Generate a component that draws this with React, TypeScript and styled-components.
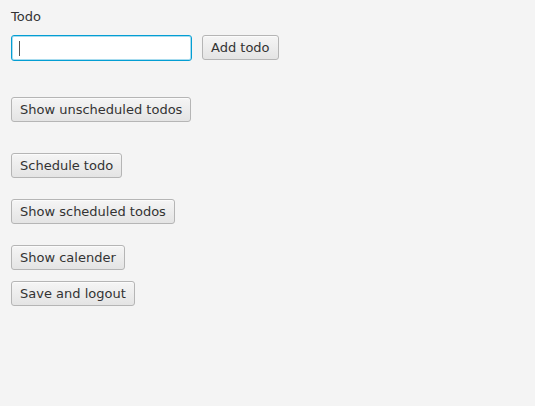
import styled, { createGlobalStyle } from 'styled-components';

const GlobalStyle = createGlobalStyle`
    html, body {
        margin: 0;
        padding: 0;
        background: #f4f4f4;
    }
    body {
        width: 535px;
        height: 406px;
        overflow: hidden;
        font-family: "DejaVu Sans", "Liberation Sans", sans-serif;
        font-size: 13px;
        color: #333;
    }
`;

const actions = [
    { label: 'Show unscheduled todos', gap: 36 },
    { label: 'Schedule todo', gap: 31 },
    { label: 'Show scheduled todos', gap: 21 },
    { label: 'Show calender', gap: 21 },
    { label: 'Save and logout', gap: 11 },
];

export default function App() {
    return (
        <>
            <GlobalStyle />
            <Page>
                <FieldLabel>Todo</FieldLabel>
                <InputRow>
                    <TodoInput>
                        <Caret />
                    </TodoInput>
                    <Button>Add todo</Button>
                </InputRow>
                {actions.map((a) => (
                    <ButtonRow key={a.label} $gap={a.gap}>
                        <Button>{a.label}</Button>
                    </ButtonRow>
                ))}
            </Page>
        </>
    );
}

const Page = styled.div`
    display: flex;
    flex-direction: column;
    align-items: flex-start;
    padding: 9px 11px;
`;

const FieldLabel = styled.div`
    line-height: 16px;
    height: 16px;
    color: #333;
`;

const InputRow = styled.div`
    display: flex;
    align-items: flex-start;
    gap: 10px;
    margin-top: 10px;
`;

const TodoInput = styled.div`
    width: 181px;
    height: 26px;
    box-sizing: border-box;
    background: #fff;
    border: 1px solid #039ed3;
    border-radius: 3px;
    box-shadow: inset 0 0 0 1px #a8dcef;
    display: flex;
    align-items: center;
    padding-left: 7px;
`;

const Caret = styled.div`
    width: 1px;
    height: 15px;
    background: #555;
`;

const ButtonRow = styled.div<{ $gap: number }>`
    margin-top: ${(p) => p.$gap}px;
`;

const Button = styled.button`
    height: 25px;
    box-sizing: border-box;
    padding: 0 8px;
    font-family: "DejaVu Sans", "Liberation Sans", sans-serif;
    font-size: 13px;
    color: #333;
    background: linear-gradient(to bottom, #f5f5f5 0%, #e4e4e4 100%);
    border: 1px solid #b5b5b5;
    border-radius: 3px;
    box-shadow: inset 0 1px 0 #fbfbfb;
    white-space: nowrap;
`;
